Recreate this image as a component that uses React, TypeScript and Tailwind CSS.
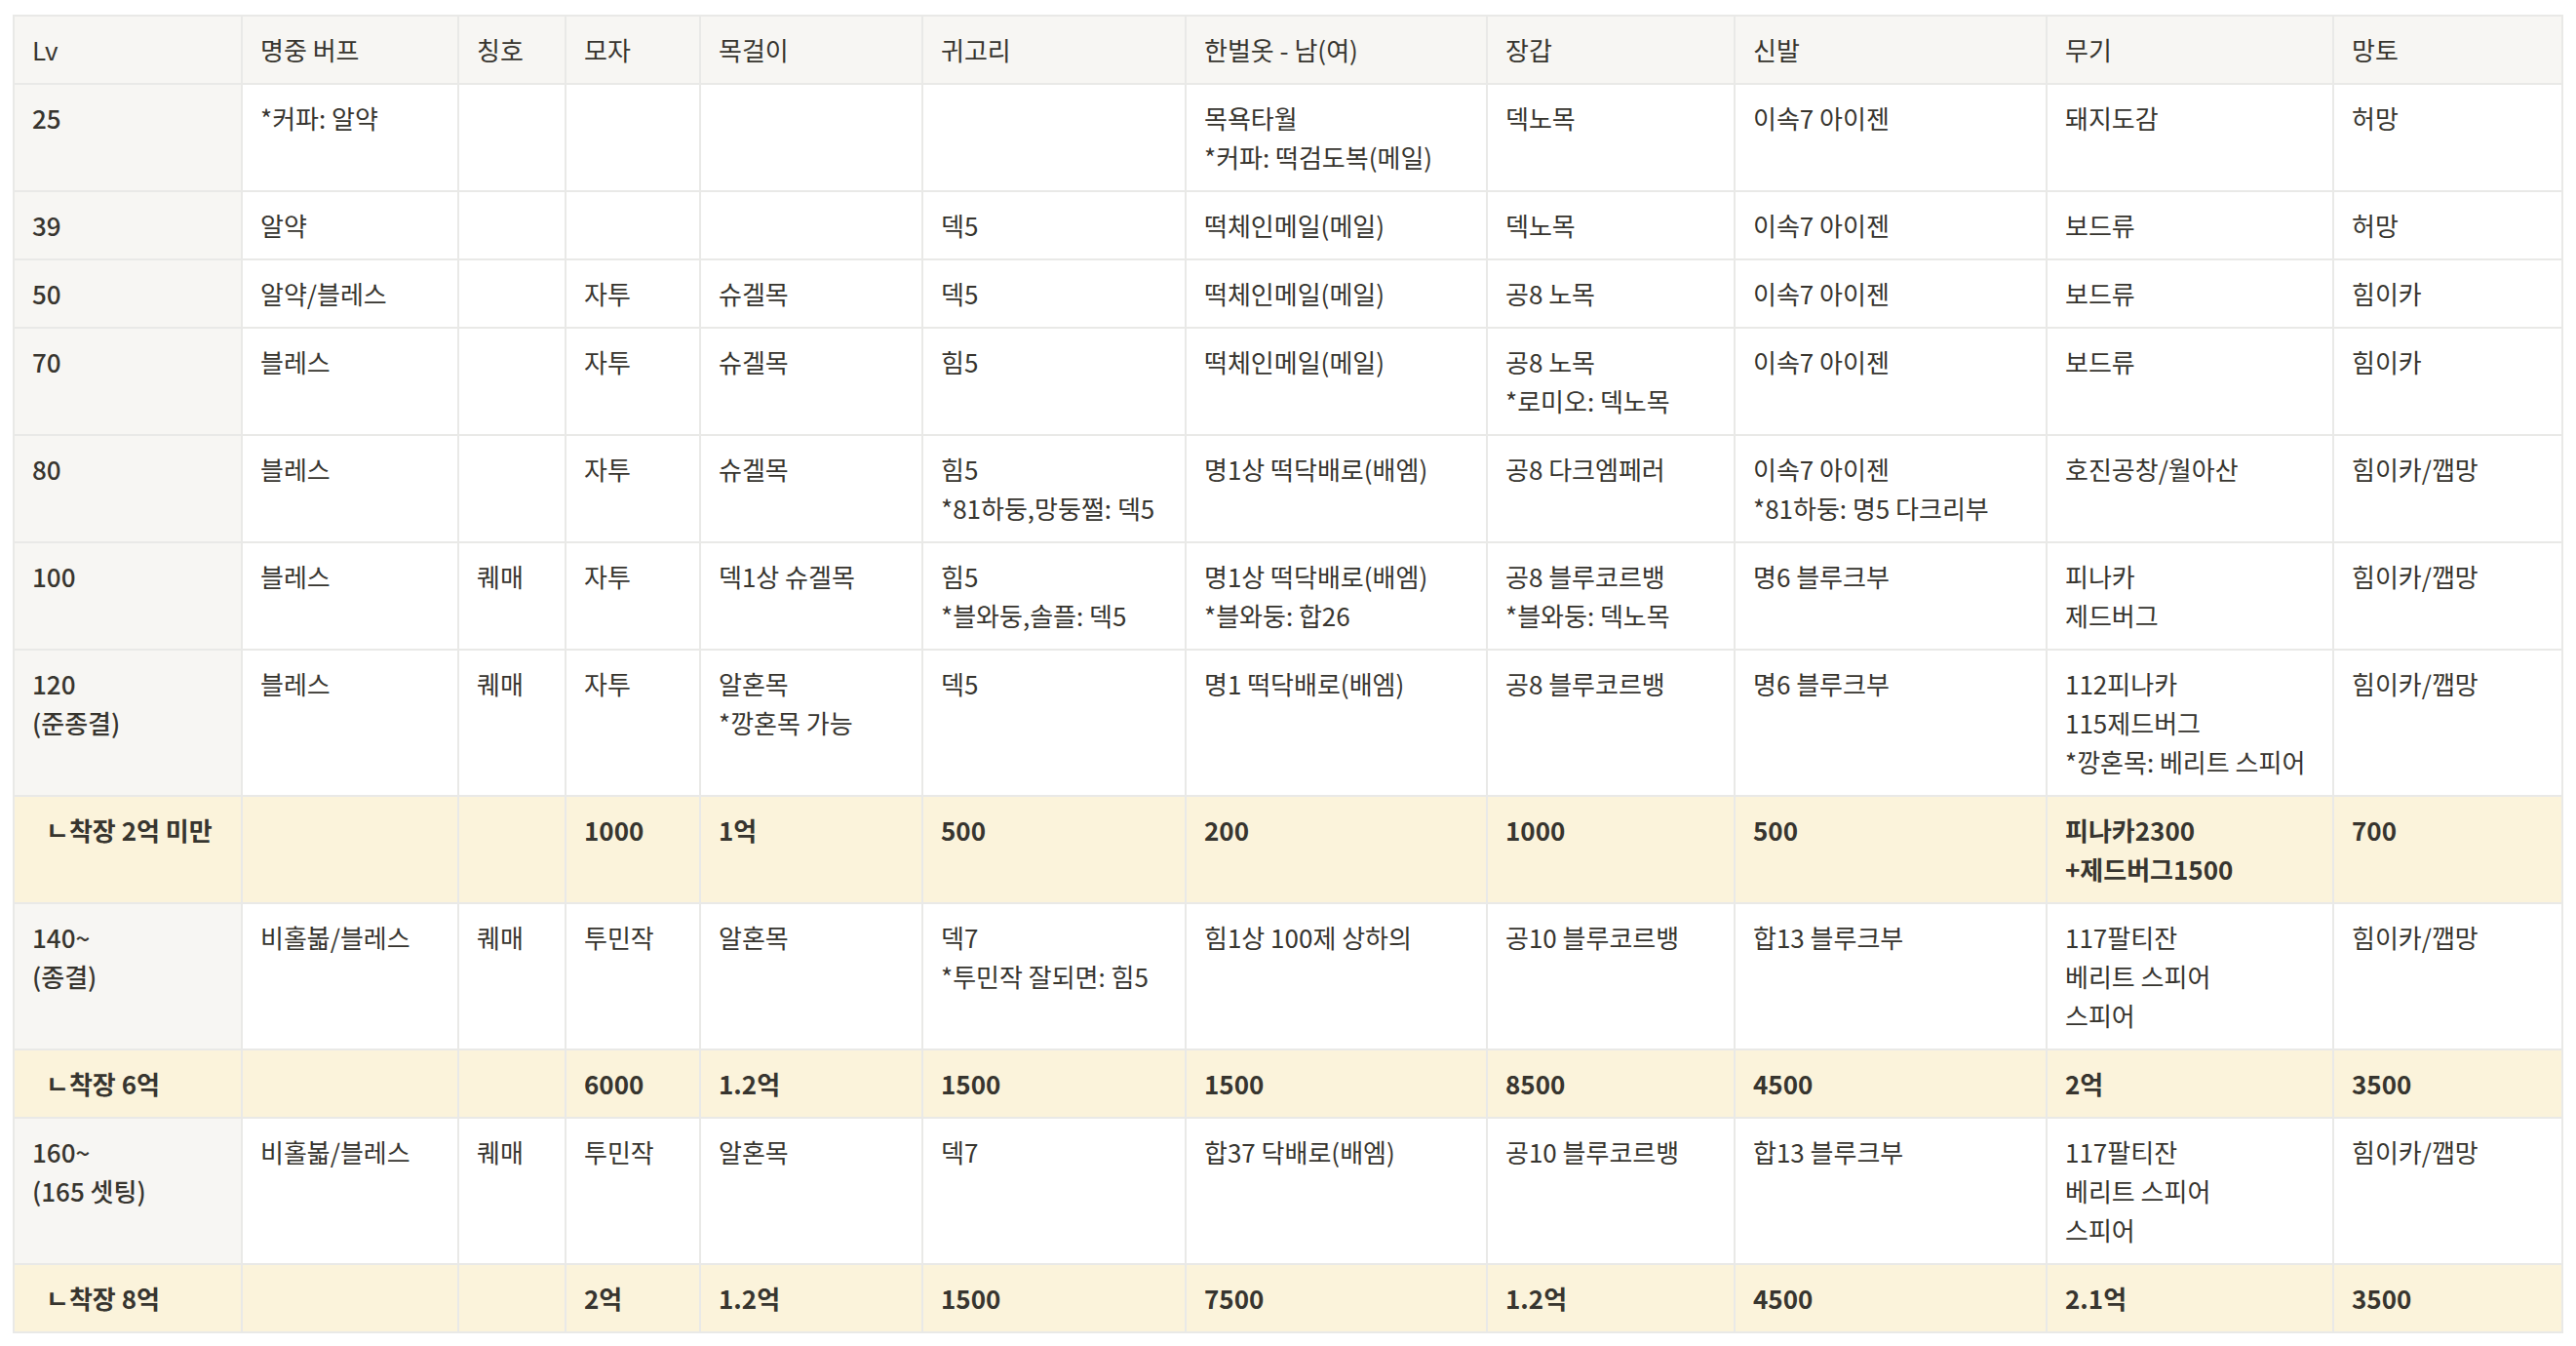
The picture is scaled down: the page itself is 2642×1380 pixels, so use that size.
import React from "react";

type Row = {
  cells: string[];
  total?: boolean;
};

const headers = ["Lv", "명중 버프", "칭호", "모자", "목걸이", "귀고리", "한벌옷 - 남(여)", "장갑", "신발", "무기", "망토"];

const colWidths = ["w-[234px]", "w-[222px]", "w-[110px]", "w-[138px]", "w-[228px]", "w-[270px]", "w-[309px]", "w-[254px]", "w-[320px]", "w-[294px]", "w-[235px]"];

const rows: Row[] = [
  { cells: ["25", "*커파: 알약", "", "", "", "", "목욕타월\n*커파: 떡검도복(메일)", "덱노목", "이속7 아이젠", "돼지도감", "허망"] },
  { cells: ["39", "알약", "", "", "", "덱5", "떡체인메일(메일)", "덱노목", "이속7 아이젠", "보드류", "허망"] },
  { cells: ["50", "알약/블레스", "", "자투", "슈겔목", "덱5", "떡체인메일(메일)", "공8 노목", "이속7 아이젠", "보드류", "힘이카"] },
  { cells: ["70", "블레스", "", "자투", "슈겔목", "힘5", "떡체인메일(메일)", "공8 노목\n*로미오: 덱노목", "이속7 아이젠", "보드류", "힘이카"] },
  {
    cells: ["80", "블레스", "", "자투", "슈겔목", "힘5\n*81하둥,망둥쩔: 덱5", "명1상 떡닥배로(배엠)", "공8 다크엠페러", "이속7 아이젠\n*81하둥: 명5 다크리부", "호진공창/월아산", "힘이카/깹망"],
  },
  {
    cells: ["100", "블레스", "퀘매", "자투", "덱1상 슈겔목", "힘5\n*블와둥,솔플: 덱5", "명1상 떡닥배로(배엠)\n*블와둥: 합26", "공8 블루코르뱅\n*블와둥: 덱노목", "명6 블루크부", "피나카\n제드버그", "힘이카/깹망"],
  },
  {
    cells: ["120\n(준종결)", "블레스", "퀘매", "자투", "알혼목\n*깡혼목 가능", "덱5", "명1 떡닥배로(배엠)", "공8 블루코르뱅", "명6 블루크부", "112피나카\n115제드버그\n*깡혼목: 베리트 스피어", "힘이카/깹망"],
  },
  { total: true, cells: ["ㄴ착장 2억 미만", "", "", "1000", "1억", "500", "200", "1000", "500", "피나카2300\n+제드버그1500", "700"] },
  {
    cells: ["140~\n(종결)", "비홀볿/블레스", "퀘매", "투민작", "알혼목", "덱7\n*투민작 잘되면: 힘5", "힘1상 100제 상하의", "공10 블루코르뱅", "합13 블루크부", "117팔티잔\n베리트 스피어\n스피어", "힘이카/깹망"],
  },
  { total: true, cells: ["ㄴ착장 6억", "", "", "6000", "1.2억", "1500", "1500", "8500", "4500", "2억", "3500"] },
  {
    cells: ["160~\n(165 셋팅)", "비홀볿/블레스", "퀘매", "투민작", "알혼목", "덱7", "합37 닥배로(배엠)", "공10 블루코르뱅", "합13 블루크부", "117팔티잔\n베리트 스피어\n스피어", "힘이카/깹망"],
  },
  { total: true, cells: ["ㄴ착장 8억", "", "", "2억", "1.2억", "1500", "7500", "1.2억", "4500", "2.1억", "3500"] },
];

function CellText({ text }: { text: string }) {
  return (
    <>
      {text.split("\n").map((line, i) => (
        <div key={i} className="whitespace-nowrap">
          {line}
        </div>
      ))}
    </>
  );
}

export default function App() {
  return (
    <div className="min-h-screen bg-white pl-[13px] pt-[15px] font-['Noto_Sans_CJK_KR','Noto_Sans',sans-serif] text-[#37352f]">
      <table className="w-[2615px] table-fixed border-collapse text-[26px] leading-[40px]">
        <colgroup>
          {colWidths.map((w, i) => (
            <col key={i} className={w} />
          ))}
        </colgroup>
        <thead>
          <tr className="bg-[#f7f6f3]">
            {headers.map((h) => (
              <th key={h} className="border-2 border-[#e9e9e7] px-[18px] py-[14px] text-left align-top font-normal">
                {h}
              </th>
            ))}
          </tr>
        </thead>
        <tbody>
          {rows.map((row, ri) => (
            <tr key={ri} className={row.total ? "bg-[#fbf3db] font-bold" : ""}>
              {row.cells.map((c, ci) => {
                const first = ci === 0;
                let cls = "border-2 border-[#e9e9e7] px-[18px] py-[14px] align-top";
                if (first && !row.total) cls += " bg-[#f7f6f3] font-medium";
                if (first && row.total) cls += " pl-[32px]";
                return (
                  <td key={ci} className={cls}>
                    <CellText text={c} />
                  </td>
                );
              })}
            </tr>
          ))}
        </tbody>
      </table>
    </div>
  );
}
